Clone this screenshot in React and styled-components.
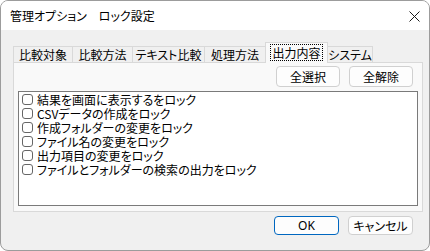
import React from 'react';
import styled, { createGlobalStyle } from 'styled-components';

const GlobalStyle = createGlobalStyle`
  html, body {
    margin: 0;
    padding: 0;
    background: #ffffff;
  }
  body {
    font-family: "Noto Sans CJK JP", "Noto Sans", sans-serif;
    font-size: 12px;
    font-feature-settings: "palt";
    color: #000;
  }
`;

const tabs = [
  { label: '比較対象', width: 60 },
  { label: '比較方法', width: 61 },
  { label: 'テキスト比較', width: 73 },
  { label: '処理方法', width: 62 },
  { label: '出力内容', width: 63, active: true },
  { label: 'システム', width: 46 },
];

const items = [
  '結果を画面に表示するをロック',
  'CSVデータの作成をロック',
  '作成フォルダーの変更をロック',
  'ファイル名の変更をロック',
  '出力項目の変更をロック',
  'ファイルとフォルダーの検索の出力をロック',
];

export default function App() {
  return (
    <React.Fragment>
      <GlobalStyle />
      <Window>
        <TitleBar>
          <Title>管理オプション　ロック設定</Title>
          <CloseButton>
            <svg width="11" height="11" viewBox="0 0 11 11">
              <path d="M0.5 0.5 L10.5 10.5 M10.5 0.5 L0.5 10.5" stroke="#1a1a1a" strokeWidth="1" />
            </svg>
          </CloseButton>
        </TitleBar>
        <Body>
          <TabRow>
            {tabs.map((t) => (
              <Tab key={t.label} $width={t.width} $active={t.active}>
                {t.active ? <Focus>{t.label}</Focus> : t.label}
              </Tab>
            ))}
          </TabRow>
          <Panel>
            <ButtonRow>
              <Button>全選択</Button>
              <Button>全解除</Button>
            </ButtonRow>
            <ListBox>
              {items.map((item) => (
                <Row key={item}>
                  <Check />
                  <Label>{item}</Label>
                </Row>
              ))}
            </ListBox>
          </Panel>
          <Footer>
            <DialogButton $primary>OK</DialogButton>
            <DialogButton>キャンセル</DialogButton>
          </Footer>
        </Body>
      </Window>
    </React.Fragment>
  );
}

const Window = styled.div`
  width: 430px;
  height: 251px;
  box-sizing: border-box;
  border: 1px solid #9c9c9c;
  border-radius: 8px;
  overflow: hidden;
  background: #f0f0f0;
  display: flex;
  flex-direction: column;
`;

const TitleBar = styled.div`
  height: 29px;
  background: #ffffff;
  display: flex;
  align-items: center;
  justify-content: space-between;
  padding: 0 9px 0 9px;
  flex-shrink: 0;
`;

const Title = styled.div`
  font-size: 12px;
  line-height: 14px;
  margin-top: 1px;
`;

const CloseButton = styled.div`
  width: 11px;
  height: 11px;
  display: flex;
  margin-top: 1px;
`;

const Body = styled.div`
  flex: 1;
  display: flex;
  flex-direction: column;
  padding: 13px 6px 0 12px;
`;

const TabRow = styled.div`
  height: 20px;
  display: flex;
  align-items: flex-end;
  position: relative;
  z-index: 1;
  margin-bottom: -1px;
`;

const Tab = styled.div`
  width: ${(p) => p.$width}px;
  height: ${(p) => (p.$active ? 21 : 17)}px;
  box-sizing: border-box;
  margin-right: -1px;
  border: 1px solid #d9d9d9;
  border-bottom: ${(p) => (p.$active ? 'none' : '1px solid #d9d9d9')};
  background: ${(p) => (p.$active ? '#f9f9f9' : '#f0f0f0')};
  display: flex;
  align-items: ${(p) => (p.$active ? 'flex-start' : 'center')};
  justify-content: center;
  line-height: 14px;
  white-space: nowrap;
  position: relative;
  z-index: ${(p) => (p.$active ? 2 : 1)};
`;

const Focus = styled.span`
  border: 1px dotted #000;
  padding: 0 1px;
  margin-top: 1px;
  line-height: 15px;
`;

const Panel = styled.div`
  width: 410px;
  height: 150px;
  box-sizing: border-box;
  border: 1px solid #d9d9d9;
  background: #f9f9f9;
  padding: 3px 9px 5px 4px;
  display: flex;
  flex-direction: column;
`;

const ButtonRow = styled.div`
  display: flex;
  justify-content: flex-end;
  gap: 9px;
  margin-bottom: 4px;
`;

const Button = styled.div`
  width: 64px;
  height: 21px;
  box-sizing: border-box;
  border: 1px solid #d0d0d0;
  border-radius: 4px;
  background: #fdfdfd;
  display: flex;
  align-items: center;
  justify-content: center;
  line-height: 14px;
`;

const ListBox = styled.div`
  flex: 1;
  margin-right: -5px;
  border: 1px solid #7a7a7a;
  background: #ffffff;
  padding: 0 0 0 3px;
  display: flex;
  flex-direction: column;
`;

const Row = styled.div`
  height: 14px;
  display: flex;
  align-items: center;
  gap: 4px;
  white-space: nowrap;
`;

const Label = styled.span`
  line-height: 13px;
  height: 13px;
  overflow: visible;
`;

const Check = styled.span`
  width: 11px;
  height: 11px;
  box-sizing: border-box;
  border: 1px solid #666666;
  border-radius: 3px;
  background: #ffffff;
  flex-shrink: 0;
`;

const Footer = styled.div`
  display: flex;
  justify-content: flex-end;
  gap: 9px;
  margin-top: 4px;
  padding-right: 10px;
`;

const DialogButton = styled.div`
  width: 65px;
  height: 19px;
  box-sizing: border-box;
  border: 1px solid ${(p) => (p.$primary ? '#0067c0' : '#d0d0d0')};
  border-radius: 4px;
  background: #fdfdfd;
  display: flex;
  align-items: center;
  justify-content: center;
  line-height: 14px;
  font-family: ${(p) => (p.$primary ? '"Noto Sans", "Noto Sans CJK JP", sans-serif' : 'inherit')};
`;
